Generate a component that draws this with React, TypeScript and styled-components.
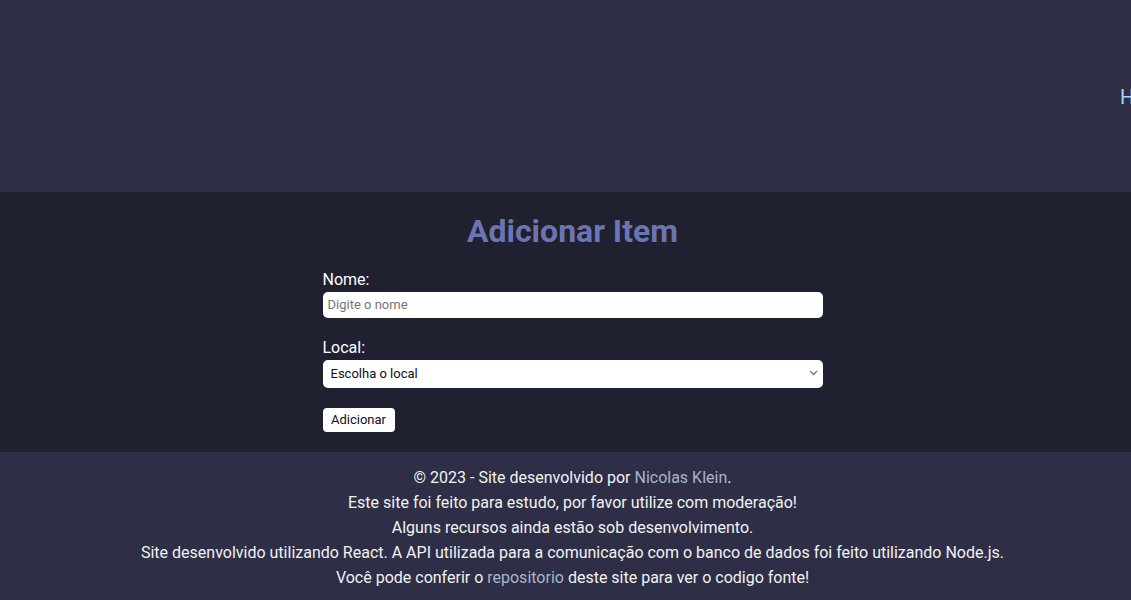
import React from "react";
import styled, { createGlobalStyle } from "styled-components";

const Global = createGlobalStyle`
  html { overflow-x: hidden; }
  html, body { margin: 0; padding: 0; background: #2e2f46; }
  body { font-family: Roboto, "Noto Sans", sans-serif; color: #f2f2f2; }
  #root { width: 1145px; }
  * { box-sizing: border-box; }
`;

const Header = styled.header`
  height: 192px;
  background: #2e2f46;
  display: flex;
  align-items: center;
  padding-left: 1120px;
  overflow: hidden;
  white-space: nowrap;
`;

const NavLink = styled.a`
  font-size: 20px;
  color: #a9d3f5;
  text-decoration: none;
  margin-top: 2px;
  margin-right: 24px;
`;

const Main = styled.main`
  background: #1f2131;
  padding: 21px 0 20px;
  display: flex;
  flex-direction: column;
  align-items: center;
`;

const Title = styled.h1`
  margin: 0 0 19px;
  font-size: 32px;
  font-weight: 700;
  color: #6c74b1;
  line-height: 37.5px;
`;

const Form = styled.form`
  width: 500px;
  display: flex;
  flex-direction: column;
`;

const Field = styled.div`
  display: flex;
  flex-direction: column;
  margin-bottom: 20px;
`;

const Label = styled.label`
  font-size: 16px;
  line-height: 19px;
  color: #ffffff;
  margin-bottom: 3px;
`;

const Input = styled.input`
  height: 26px;
  border: none;
  border-radius: 5px;
  padding: 0 5px;
  font-family: Roboto, sans-serif;
  font-size: 13px;
  background: #fff;
  color: #222;
  outline: none;
  &::placeholder { color: #757575; }
`;

const SelectWrap = styled.div`
  position: relative;
  display: flex;
`;

const Select = styled.select`
  flex: 1;
  height: 28px;
  border: none;
  border-radius: 5px;
  padding: 0 24px 0 8px;
  font-family: Roboto, sans-serif;
  font-size: 13px;
  background: #fff;
  color: #111;
  outline: none;
  appearance: none;
  -webkit-appearance: none;
`;

const Chevron = styled.svg`
  position: absolute;
  right: 5px;
  top: 10px;
  width: 9px;
  height: 6px;
  pointer-events: none;
`;

const Button = styled.button`
  align-self: flex-start;
  height: 24px;
  width: 72px;
  border: none;
  border-radius: 4px;
  background: #fff;
  color: #111;
  font-family: Roboto, sans-serif;
  font-size: 13px;
  padding: 0;
`;

const Footer = styled.footer`
  background: #2e2f46;
  padding: 13px 0 10px;
  text-align: center;
  font-size: 16px;
  line-height: 25px;
  color: #f2f2f2;
`;

const Line = styled.p`
  margin: 0;
`;

const Link = styled.a`
  color: #a7b6cd;
  text-decoration: none;
`;

export default function App() {
  return (
    <>
      <Global />
      <Header>
        <NavLink href="#">Home</NavLink>
      </Header>
      <Main>
        <Title>Adicionar Item</Title>
        <Form onSubmit={(e) => e.preventDefault()}>
          <Field>
            <Label htmlFor="nome">Nome:</Label>
            <Input id="nome" placeholder="Digite o nome" />
          </Field>
          <Field>
            <Label htmlFor="local">Local:</Label>
            <SelectWrap>
              <Select id="local" defaultValue="">
                <option value="">Escolha o local</option>
              </Select>
              <Chevron viewBox="0 0 9 6">
                <path d="M1 1l3.5 3.5L8 1" fill="none" stroke="#777" strokeWidth="1.4" />
              </Chevron>
            </SelectWrap>
          </Field>
          <Button type="submit">Adicionar</Button>
        </Form>
      </Main>
      <Footer>
        <Line>© 2023 - Site desenvolvido por <Link href="#">Nicolas Klein</Link>.</Line>
        <Line>Este site foi feito para estudo, por favor utilize com moderação!</Line>
        <Line>Alguns recursos ainda estão sob desenvolvimento.</Line>
        <Line>Site desenvolvido utilizando React. A API utilizada para a comunicação com o banco de dados foi feito utilizando Node.js.</Line>
        <Line>Você pode conferir o <Link href="#">repositorio</Link> deste site para ver o codigo fonte!</Line>
      </Footer>
    </>
  );
}
